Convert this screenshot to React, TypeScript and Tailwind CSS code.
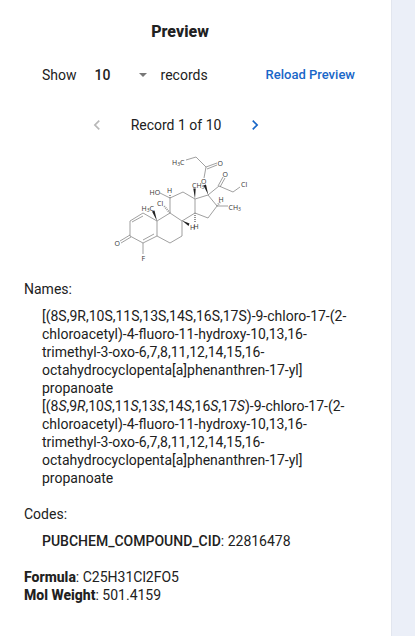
import React from "react";

const bonds: [number, number, number, number][] = [
  [185, 160, 195, 157], [195, 157, 205, 167], [205, 167, 216, 163], [206, 169, 216, 165],
  [205, 167, 203, 178], [207, 195, 218, 186], [217, 186, 222, 177], [219, 187, 224, 178],
  [218, 186, 232, 192], [232, 192, 239, 187], [194, 199, 207, 195], [182, 192, 194, 199],
  [169, 198, 182, 192], [159, 193, 169, 198], [169, 198, 169, 213], [194, 199, 194, 213],
  [207, 195, 216, 206], [216, 206, 227, 206], [216, 206, 207, 218], [207, 218, 194, 213],
  [194, 213, 181, 221], [181, 221, 169, 213], [181, 221, 181, 236], [181, 236, 169, 243],
  [169, 243, 156, 236], [156, 236, 156, 221], [156, 221, 169, 213], [156, 221, 142, 213],
  [142, 213, 129, 221], [142, 216, 131, 222], [129, 221, 129, 236], [129, 236, 142, 243],
  [142, 243, 156, 236], [142, 240, 153, 234], [129, 235, 119, 241], [130, 237, 120, 243],
  [142, 243, 142, 254],
];

function Molecule() {
  return (
    <svg viewBox="108 150 145 115" className="h-[115px] w-[145px]" role="img" aria-label="Chemical structure">
      <g stroke="#777" strokeWidth="0.7" fill="none">
        {bonds.map(([x1, y1, x2, y2], i) => (
          <line key={i} x1={x1} y1={y1} x2={x2} y2={y2} />
        ))}
        <path strokeDasharray="1 1" strokeWidth="2" d="M169 213 163 206M169 198V194M216 206 219 202M194 213V222" stroke="#999" />
      </g>
      <path fill="#222" d="M194 199 192.300 188.500H194.700ZM207.300 195 202.500 185.500 205 184.500ZM156 221 151 211.500 153.500 210.500ZM181 220.500 188.500 223.500 187.500 226Z" />
      <g fill="#333" fontSize="7" fontFamily="'Open Sans', 'Noto Sans', sans-serif">
        <text x="171" y="165">H<tspan fontSize="5" dy="1">3</tspan><tspan dy="-1">C</tspan></text>
        <text x="216.500" y="165.500">O</text>
        <text x="200" y="184">O</text>
        <text x="191" y="188">CH<tspan fontSize="5" dy="1">3</tspan></text>
        <text x="221.500" y="176.500">O</text>
        <text x="240" y="187">Cl</text>
        <text x="148.500" y="195">HO</text>
        <text x="166" y="193">H</text>
        <text x="156" y="205.500">Cl</text>
        <text x="140.500" y="210.500">H<tspan fontSize="5" dy="1">3</tspan><tspan dy="-1">C</tspan></text>
        <text x="217.500" y="201.500">H</text>
        <text x="227.500" y="209.500">CH<tspan fontSize="5" dy="1">3</tspan></text>
        <text x="189" y="229.500">H</text>
        <text x="192.500" y="228.500">H</text>
        <text x="113.500" y="246">O</text>
        <text x="140.500" y="260.500">F</text>
      </g>
    </svg>
  );
}

function Chevron({ left = false }: { left?: boolean }) {
  return (
    <svg viewBox="0 0 24 24" className="h-5 w-5" fill="currentColor" aria-hidden="true">
      <path d={left ? "M15.410 7.410 14 6l-6 6 6 6 1.410-1.410L10.830 12z" : "M10 6 8.590 7.410 13.170 12l-4.580 4.590L10 18l6-6z"} />
    </svg>
  );
}

const ending = ")-9-chloro-17-(2-chloroacetyl)-4-fluoro-11-hydroxy-10,13,16-trimethyl-3-oxo-6,7,8,11,12,14,15,16-octahydrocyclopenta[a]phenanthren-17-yl] propanoate";
const centres = ["8S", "9R", "10S", "11S", "13S", "14S", "16S", "17S"];

export default function App() {
  return (
    <div className="flex min-h-screen bg-[#ebeff8] font-['Roboto',sans-serif] text-sm leading-[18px] text-[#212121]">
      <main className="min-w-0 flex-1 border-r border-[#e2e6ef] bg-white pt-5">
        <h1 className="pr-[31px] text-center text-base leading-6 font-extrabold">Preview</h1>
        <div className="mt-[22px] flex items-center pr-9 pl-[42px]">
          <label htmlFor="record-count">Show</label>
          <div className="relative ml-[18px] w-[52px]">
            <select id="record-count" defaultValue="10" className="block w-full appearance-none bg-transparent font-medium outline-none">
              <option>10</option><option>25</option><option>50</option>
            </select>
            <svg viewBox="0 0 8 4" className="pointer-events-none absolute top-[7px] right-0 h-1 w-2" fill="#777" aria-hidden="true"><path d="M0 0h8L4 4z" /></svg>
          </div>
          <span className="ml-3.5">records</span>
          <button type="button" className="ml-auto text-[13px] font-medium text-[#1967c8]">Reload Preview</button>
        </div>
        <nav aria-label="Records" className="mt-[31px] flex items-center justify-center pr-[39px]">
          <button type="button" disabled aria-label="Previous record" className="text-[#b8b8b8]"><Chevron left /></button>
          <span className="mx-6">Record 1 of 10</span>
          <button type="button" aria-label="Next record" className="text-[#1967c8]"><Chevron /></button>
        </nav>
        <div className="mt-[15px] flex justify-center pr-[29px]"><Molecule /></div>
        <section className="mt-[15px] pr-8 pl-6">
          <h2>Names:</h2>
          <div className="mt-[9px] pl-[18px]">
            <p>{`[(${centres.join(",")}${ending}`}</p>
            <p>
              {centres.map((c, i) => (
                <React.Fragment key={c}>{`${i ? "," : "[("}${c.slice(0, -1)}`}<i>{c.slice(-1)}</i></React.Fragment>
              ))}
              {ending}
            </p>
          </div>
        </section>
        <section className="mt-[18px] pr-8 pl-6">
          <h2>Codes:</h2>
          <p className="mt-[9px] pl-[18px]"><span className="font-medium">PUBCHEM_COMPOUND_CID</span>: 22816478</p>
        </section>
        <section className="mt-[18px] pr-8 pb-8 pl-6">
          <p><b className="font-extrabold">Formula</b>: C25H31Cl2FO5</p>
          <p><b className="font-extrabold">Mol Weight</b>: 501.4159</p>
        </section>
      </main>
      <aside className="w-[23px] shrink-0" />
    </div>
  );
}
